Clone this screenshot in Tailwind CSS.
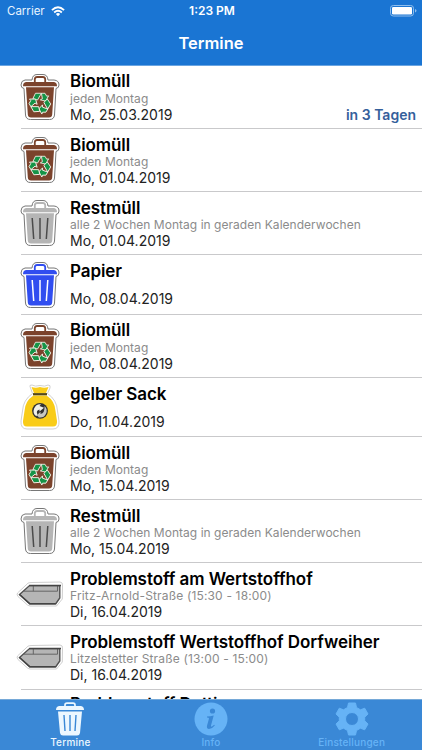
<!DOCTYPE html>
<html lang="de">
<head>
<meta charset="utf-8">
<title>Termine</title>
<script src="https://cdn.jsdelivr.net/npm/@tailwindcss/browser@4"></script>
</head>
<body class="bg-white font-[Inter,'Liberation_Sans',sans-serif] text-black">
<svg class="hidden">
  <symbol id="can" viewBox="0 0 40 48">
    <path d="M5 7H12Q12.500 1.500 17 1.500H23Q27.500 1.500 28 7H34Q39 7.500 39 12Q39 15 36 15.500L34.500 42Q34 46.500 29.500 46.500H10.500Q6 46.500 5.500 42L4 15.500Q1 15 1 12Q1 7.500 5 7Z" fill="#fff" stroke="#777" stroke-width="1"/>
    <path d="M14.800 9V6.200Q15 4 17.200 4H22.800Q25 4 25.200 6.200V9" fill="none" stroke="currentColor" stroke-width="1.800"/>
    <path d="M6 9H34Q37 9.500 37 13.300H3Q3 9.500 6 9ZM6 14.300H34L32.200 41.500Q32 44.500 29 44.500H11Q8 44.500 7.800 41.500Z" fill="currentColor"/>
  </symbol>
  <symbol id="bio" viewBox="0 0 40 48">
    <use href="#can"/>
    <g fill="#159447" stroke="#f8f2ea" stroke-width=".8" stroke-linejoin="round" transform="translate(20 30) scale(1.08)">
      <path id="arm" d="M-6.600 -4L-4.200 -9H1.300L-2.300 -2.800ZM1.300 -9H4.600L6.200 -6.300L8 -6.600L5.200 -1.800L.3 -2.900L2.200 -4Z"/>
      <use href="#arm" transform="rotate(120)"/>
      <use href="#arm" transform="rotate(240)"/>
    </g>
  </symbol>
  <symbol id="rest" viewBox="0 0 40 48">
    <use href="#can"/>
    <path d="M12.200 19L13.700 40M20 19V40M27.800 19L26.300 40" fill="none" stroke="#4b4b4b" stroke-width="1.500"/>
  </symbol>
  <symbol id="papier" viewBox="0 0 40 48">
    <use href="#can"/>
    <path d="M12.200 19L13.700 40M20 19V40M27.800 19L26.300 40" fill="none" stroke="#fff" stroke-width="1.500"/>
  </symbol>
  <symbol id="sack" viewBox="0 0 40 46">
    <path d="M10 2.500Q9 1 12 1Q15 3 20 1.500Q25 3 28 1Q31 1 30 4L27.500 9.500Q37 16 37.500 27L39 37Q39.500 45 33 45H7Q.5 45 1 37L2.500 27Q3 16 12.500 9.500Z" fill="#fff" stroke="#ccc" stroke-width=".9"/>
    <path d="M11.500 3Q16 4.500 20 3Q24 4.500 28.500 3L26 9H14ZM13.500 11.500H26.500Q35 17 35.500 27L37 37Q37.500 42.500 33 42.500H7Q2.500 42.500 3 37L4.500 27Q5 17 13.500 11.500Z" fill="#f9cc18"/>
    <path d="M13 10.200H27" stroke="#554715" stroke-width="2.200"/>
    <circle cx="20" cy="26.800" r="7.900" fill="#333"/>
    <path d="M21 20.200A6.700 6.700 0 0 0 16.300 32.200L17.500 30.500Q15.500 26.500 19.500 25.500V27.500L24 23.800L19.500 22Z" fill="#f1f1ea"/>
    <path d="M24.500 22A6.700 6.700 0 0 1 19 33.500L16.800 31.200L20.500 27.800V30Q25 29 24.500 22Z" fill="#c9c9c2"/>
  </symbol>
  <symbol id="skip" viewBox="0 0 48 26">
    <path d="M1.500 12L12 2.200Q13 1.500 16 1.500L44 1Q47 1 46.500 5L46.300 18L40.500 25H14L11.500 24L2 15.500Q.5 14 1.500 12Z" fill="#fff" stroke="#c8c8c8" stroke-width=".9"/>
    <path d="M3.500 13.500L13.500 4.600H43.800V17L39.800 22.700H13.800Z" fill="#b5b5b5" stroke="#505050" stroke-width="1.400"/>
    <path d="M7.500 10.200H41.500V4.500M17.300 4.500V10.200" fill="none" stroke="#5c5c5c" stroke-width=".9"/>
    <path d="M13.200 4.500H45M3.500 13.500L13.800 22.700H39.800" fill="none" stroke="#444" stroke-width="1.500"/>
  </symbol>
</svg>

<div class="relative h-[750px] w-[422px] overflow-hidden">
  <header class="h-[66px] border-b border-[#6aa5e2] bg-[#1a75d3] text-white">
    <div class="grid h-[22px] grid-cols-3 items-center pl-[7px] pr-[5px] text-[12px]">
      <div class="flex items-center gap-[6px] text-[#e8f4ff]"><span class="pt-px text-[11.5px]">Carrier</span>
        <svg class="h-[11px] w-[14px]" viewBox="0 0 15 11" fill="none" stroke="#fff" stroke-width="2"><path d="M1 4Q7.500 -2 14 4M3.400 6.500Q7.500 2.800 11.600 6.500"/><path d="M7.500 10.500L5.200 8.200Q7.500 6.200 9.800 8.200Z" fill="#fff" stroke="none"/></svg>
      </div>
      <div class="text-center font-semibold">1:23 PM</div>
      <svg class="h-[12px] w-[27px] justify-self-end" viewBox="0 0 27 12"><rect x=".5" y=".5" width="23" height="10.500" rx="2.800" fill="none" stroke="#8fbeed"/><rect x="2" y="2" width="20" height="7.500" rx="1.300" fill="#fff"/><path d="M25 4Q26.500 4.500 26.500 5.800Q26.500 7 25 7.500Z" fill="#8fbeed"/></svg>
    </div>
    <h1 class="text-center text-[16.5px] leading-[43px] font-semibold">Termine</h1>
  </header>

  <main id="list"></main>

  <nav class="absolute inset-x-0 bottom-0 grid h-[51px] grid-cols-3 border-t border-[#76a9d8] bg-[#3a88d6] text-[10px] leading-[12px] font-medium text-[#66b3f6]">
    <div class="flex flex-col items-center pt-[2px] text-[#ecf7ff]">
      <svg class="h-[34px] w-[30px]" viewBox="0 0 30 34"><path d="M10 4V3Q10 1.200 12 1.200H18Q20 1.200 20 3V4" fill="none" stroke="currentColor" stroke-width="1.700"/><path d="M4 4H26Q29 4.500 29 8H1Q1 4.500 4 4ZM3 9.500H27L25 31Q24.500 33.500 22 33.500H8Q5.500 33.500 5 31Z" fill="currentColor"/><path d="M9 13L10 29M15 13V29M21 13L20 29" stroke="#3a88d6" stroke-width="1.400"/></svg>
      <span class="tracking-[0.2px]">Termine</span>
    </div>
    <div class="flex flex-col items-center pt-[2px]">
      <svg class="h-[34px] w-[34px]" viewBox="0 0 34 34"><circle cx="17" cy="17" r="16.500" fill="currentColor"/><circle cx="18.500" cy="9" r="2.600" fill="#3a88d6"/><path d="M13 14.500Q16 14.300 19.700 13.500L17 23.500Q16.800 25 18 24.500L20.200 22.800L20.800 23.500Q18 27 15 27Q12.300 26.800 13 23.800L15 16.500Q15 15.500 13 15.500Z" fill="#3a88d6"/></svg>
      <span class="tracking-[0.2px]">Info</span>
    </div>
    <div class="flex flex-col items-center pt-[2px]">
      <svg class="h-[34px] w-[34px]" viewBox="0 0 34 34"><path fill="currentColor" stroke="currentColor" stroke-linejoin="round" fill-rule="evenodd" d="M13.500 1H20.500L21.500 5.500L25.500 7.800L29.700 6.200L33 12L29.700 15.200V18.800L33 22L29.700 27.800L25.500 26.200L21.500 28.500L20.500 33H13.500L12.500 28.500L8.500 26.200L4.300 27.800L1 22L4.300 18.800V15.200L1 12L4.300 6.200L8.500 7.800L12.500 5.500ZM17 10.500A6.500 6.500 0 1 0 17 23.500A6.500 6.500 0 1 0 17 10.500Z"/></svg>
      <span class="tracking-[0.2px]">Einstellungen</span>
    </div>
  </nav>
</div>

<script>
const J = 'jeden Montag', W = 'alle 2 Wochen Montag in geraden Kalenderwochen';
const rows = [
  ['bio', 'Biomüll', J, 'Mo, 25.03.2019', 63, 'in 3 Tagen'],
  ['bio', 'Biomüll', J, 'Mo, 01.04.2019', 63],
  ['rest', 'Restmüll', W, 'Mo, 01.04.2019', 63],
  ['papier', 'Papier', '', 'Mo, 08.04.2019', 60],
  ['bio', 'Biomüll', J, 'Mo, 08.04.2019', 63],
  ['sack', 'gelber Sack', '', 'Do, 11.04.2019', 59],
  ['bio', 'Biomüll', J, 'Mo, 15.04.2019', 63],
  ['rest', 'Restmüll', W, 'Mo, 15.04.2019', 63],
  ['skip', 'Problemstoff am Wertstoffhof', 'Fritz-Arnold-Straße (15:30 - 18:00)', 'Di, 16.04.2019', 63],
  ['skip', 'Problemstoff Wertstoffhof Dorfweiher', 'Litzelstetter Straße (13:00 - 15:00)', 'Di, 16.04.2019', 64],
  ['', 'Problemstoff Dettingen', '', '', 63],
];
const icon = {
  bio: 'h-[48px] w-[40px] text-[#7b432c]',
  rest: 'h-[48px] w-[40px] text-[#b5b5b5]',
  papier: 'h-[48px] w-[40px] text-[#304df0]',
  sack: 'h-[46px] w-[40px]',
  skip: 'h-[26px] w-[48px] shrink-0',
};
const iconTop = { bio: 'pt-[7px]', rest: 'pt-[7px]', papier: 'pt-[5.5px]', sack: 'pt-[5.5px]', skip: 'pt-[17.5px]' };
const titleTop = i => i === 10 ? 'pt-[4px]' : i === 0 || i === 4 ? 'pt-[5px]' : 'pt-[6px]';
document.getElementById('list').innerHTML = rows.map(([k, t, s, d, h, n], i) => `
  <article class="flex" style="height:${h}px">
    <div class="flex w-[70px] shrink-0 items-start justify-center pr-[10px] pl-[20px] ${iconTop[k] || ''}">${k ? `<svg class="${icon[k]}"><use href="#${k}"/></svg>` : ''}</div>
    <div class="relative flex-1 whitespace-nowrap before:absolute before:bottom-0 before:left-[-49px] before:right-0 before:h-px before:bg-[#c9c9cb]">
      <h2 class="h-[26px] text-[17px] leading-[21px] font-semibold tracking-[-0.07px] ${titleTop(i)}">${t}</h2>
      <p class="text-[12px] leading-[14px] text-[#8b8b8b] ${k === 'skip' ? 'tracking-[0.16px]' : 'tracking-[0.03px]'} ${s ? 'h-[14px]' : 'h-[9px]'}">${s}</p>
      <div class="flex justify-between pr-[6px] text-[14px] leading-[18px] text-[#222]"><span>${d}</span>${n ? `<span class="font-semibold text-[#35609b]">${n}</span>` : ''}</div>
    </div>
  </article>`).join('');
</script>
</body>
</html>
